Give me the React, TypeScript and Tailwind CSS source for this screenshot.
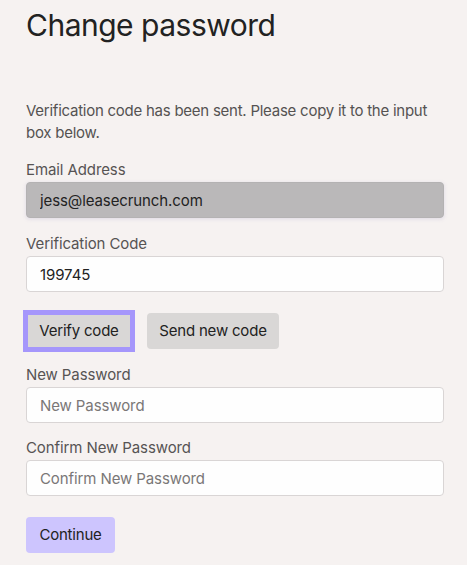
import React from 'react';

const Field: React.FC<{ label: string; value?: string; placeholder?: string; disabled?: boolean; className?: string }> = ({
  label,
  value,
  placeholder,
  disabled,
  className = '',
}) => (
  <div className={className}>
    <label className="block text-[15px] leading-[22px] tracking-[-0.1px] text-[#575454]">{label}</label>
    <input
      readOnly
      value={value ?? ''}
      placeholder={placeholder}
      className={`mt-px block h-[36px] w-full rounded-[4px] border px-[13px] text-[15px] tracking-[-0.1px] text-[#222] outline-none placeholder:text-[#7a7777] ${
        disabled
          ? 'border-[#b4b2b3] bg-[#bab8b9] shadow-[0_1px_4px_rgba(120,110,180,0.18)]'
          : 'border-[#d9d5d5] bg-[#fefefe]'
      }`}
    />
  </div>
);

const App: React.FC = () => {
  return (
    <div
      className="min-h-screen bg-[#f6f2f1] pl-[26px] pr-[23px] pt-[6px] pb-4"
      style={{ fontFamily: 'Inter, "Noto Sans", sans-serif' }}
    >
      <h1 className="text-[30px] leading-[38px] tracking-[-0.5px] text-[#222]">Change password</h1>

      <p className="mt-[56px] text-[15px] leading-[22px] tracking-[-0.25px] text-[#555252]">
        Verification code has been sent. Please copy it to the input box below.
      </p>

      <Field className="mt-[15px]" label="Email Address" value="jess@leasecrunch.com" disabled />
      <Field className="mt-[15px]" label="Verification Code" value="199745" />

      <div className="mt-[21px] flex items-center gap-[15px]">
        <button className="flex h-[36px] w-[106px] items-center justify-center border-2 border-[#a596fb] bg-[#d9d7d6] text-[15px] tracking-[-0.2px] text-[#222] shadow-[0_0_0_3px_#a596fb]">
          Verify code
        </button>
        <button className="flex h-[36px] w-[132px] items-center justify-center rounded-[4px] bg-[#d9d7d6] text-[15px] tracking-[-0.2px] text-[#222]">
          Send new code
        </button>
      </div>

      <Field className="mt-[15px]" label="New Password" placeholder="New Password" />
      <Field className="mt-[14px]" label="Confirm New Password" placeholder="Confirm New Password" />

      <button className="mt-[21px] h-[36px] w-[89px] rounded-[4px] bg-[#cdc5fe] text-[15px] tracking-[-0.2px] text-[#222]">
        Continue
      </button>
    </div>
  );
};

export default App;
